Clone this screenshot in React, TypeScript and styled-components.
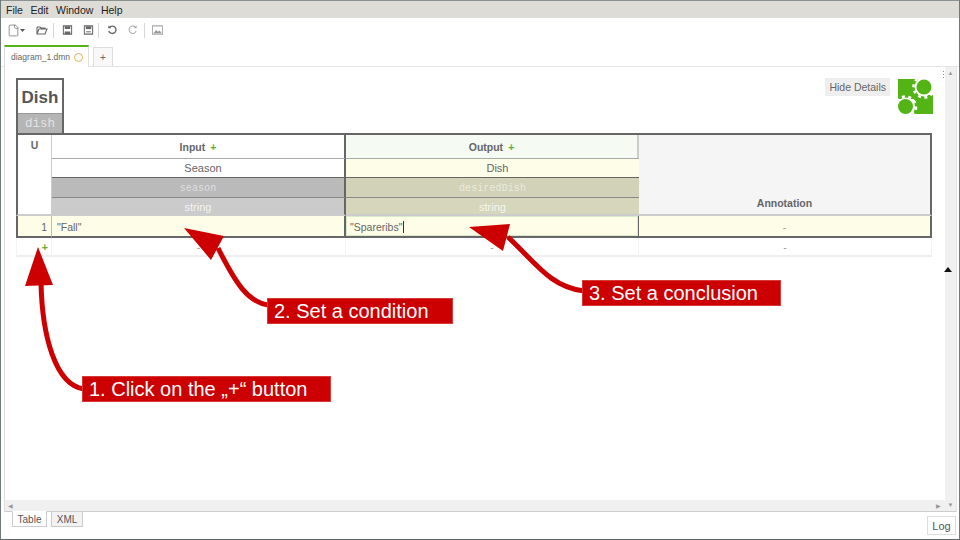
import React from "react";
import styled, {createGlobalStyle} from "styled-components";
import {LuFile} from "react-icons/lu";

const Global = createGlobalStyle`
    html, body { margin: 0; padding: 0; background: #fff; }
    body { font-family: "Liberation Sans", Arial, sans-serif; color: #444; }
`;

const Page = styled.div`
    position: relative;
    width: 960px;
    height: 540px;
    overflow: hidden;
    display: flex;
    flex-direction: column;
    box-sizing: border-box;
    border-left: 1px solid #6f7a7a;
    border-right: 1px solid #6f7a7a;
    border-bottom: 1px solid #5c6464;
    background: #fff;
`;

const MenuBar = styled.div`
    height: 18px;
    flex: none;
    display: flex;
    align-items: center;
    gap: 7.5px;
    padding: 1px 0 0 5px;
    box-sizing: border-box;
    background: #dedcd6;
    border-top: 1px solid #8d9292;
    font-size: 10.5px;
    color: #222;
`;

const Toolbar = styled.div`
    height: 26px;
    flex: none;
    display: flex;
    align-items: center;
    padding: 0 0 2px 6px;
    box-sizing: border-box;
    color: #555;
`;

const ToolIcon = styled.svg<{$width?: number; $faded?: boolean}>`
    width: ${(p) => p.$width ?? 11}px;
    height: 12px;
    flex: none;
    fill: none;
    stroke: ${(p) => (p.$faded ? "#aaa" : "#666")};
    stroke-width: 1.1;
`;

const ToolGap = styled.span<{$w: number}>`
    width: ${(p) => p.$w}px;
    flex: none;
`;

const ToolDivider = styled.span<{$l: number; $r: number}>`
    width: 1px;
    height: 15px;
    flex: none;
    margin: 0 ${(p) => p.$r}px 0 ${(p) => p.$l}px;
    background: #d6d6d6;
`;

const TabStrip = styled.div`
    height: 23px;
    flex: none;
    display: flex;
    align-items: flex-end;
    gap: 4px;
    padding-left: 3px;
    box-sizing: border-box;
    border-bottom: 1px solid #e4e4e4;
`;

const FileTab = styled.div`
    width: 85px;
    height: 22px;
    display: flex;
    align-items: center;
    gap: 4px;
    box-sizing: border-box;
    padding-left: 6px;
    margin-bottom: -1px;
    background: #fff;
    border: 1px solid #ddd;
    border-top: 2px solid #52b415;
    border-bottom: none;
    font-size: 8.5px;
    color: #666;
`;

const DirtyDot = styled.span`
    width: 9px;
    height: 9px;
    flex: none;
    box-sizing: border-box;
    border: 1px solid #d9b44a;
    border-radius: 50%;
`;

const AddTab = styled.div`
    width: 20px;
    height: 19px;
    display: flex;
    align-items: center;
    justify-content: center;
    box-sizing: border-box;
    background: #f8f8f8;
    border: 1px solid #ddd;
    border-bottom: none;
    font-size: 10px;
    color: #666;
`;

const Workspace = styled.div`
    flex: 1;
    display: flex;
    margin: 0 2px 0 3px;
    min-height: 0;
    border-left: 1px solid #ddd;
    border-right: 1px solid #e4e4e4;
    border-bottom: 1px solid #ccc;
`;

const ScrollColumn = styled.div`
    flex: 1;
    min-width: 0;
    display: flex;
    flex-direction: column;
`;

const Canvas = styled.div`
    flex: 1;
    min-height: 0;
    padding: 11px 12px 0 11px;
    display: flex;
    flex-direction: column;
`;

const TopRow = styled.div`
    display: flex;
    align-items: flex-start;
    justify-content: space-between;
    height: 55px;
    flex: none;
`;

const NameBox = styled.div`
    width: 48px;
    box-sizing: border-box;
    border: 2px solid #666;
    border-bottom: none;
`;

const NameTitle = styled.div`
    height: 33px;
    display: flex;
    align-items: center;
    justify-content: center;
    font-size: 17px;
    font-weight: bold;
    color: #555;
    padding-top: 3px;
    box-sizing: border-box;
`;

const NameId = styled.div`
    height: 20px;
    display: flex;
    align-items: center;
    justify-content: center;
    background: #b5b5b5;
    border-top: 1px solid #999;
    box-sizing: border-box;
    padding-top: 1px;
    font-family: "Liberation Mono", monospace;
    font-size: 12.5px;
    color: #e2e2e2;
`;

const DetailsArea = styled.div`
    display: flex;
    align-items: flex-start;
    gap: 8px;
`;

const HideDetails = styled.div`
    height: 18px;
    padding: 0 4px;
    display: flex;
    align-items: center;
    background: #eee;
    font-size: 10.5px;
    color: #666;
`;

const LogoMark = styled.svg`
    width: 35px;
    height: 35px;
    margin-top: 1px;
    flex: none;
`;

const Decision = styled.div`
    width: 916px;
    display: grid;
    grid-template-columns: 36px 294px 293px 293px;
    grid-template-rows: 23px 20px 20px 18px 22px 19px;
    font-size: 10.5px;
    color: #555;
    box-sizing: border-box;
    border-top: 2px solid #666;
`;

type CellProps = {
    $bg?: string;
    $color?: string;
    $left?: string;
    $right?: string;
    $top?: string;
    $bottom?: string;
    $align?: string;
    $valign?: string;
    $bold?: boolean;
    $mono?: boolean;
    $large?: boolean;
    $rows?: number;
    $pad?: string;
};

const Cell = styled.div<CellProps>`
    display: flex;
    box-sizing: border-box;
    min-width: 0;
    align-items: ${(p) => p.$valign ?? "center"};
    justify-content: ${(p) => p.$align ?? "center"};
    background: ${(p) => p.$bg ?? "#fff"};
    color: ${(p) => p.$color ?? "#666"};
    border-left: ${(p) => p.$left ?? "none"};
    border-right: ${(p) => p.$right ?? "none"};
    border-top: ${(p) => p.$top ?? "none"};
    border-bottom: ${(p) => p.$bottom ?? "none"};
    font-weight: ${(p) => (p.$bold ? "bold" : "normal")};
    font-family: ${(p) => (p.$mono ? '"Liberation Mono", monospace' : "inherit")};
    font-size: ${(p) => (p.$mono ? "10px" : p.$large ? "11px" : "inherit")};
    letter-spacing: ${(p) => (p.$mono ? "0.1px" : "0")};
    grid-row: span ${(p) => p.$rows ?? 1};
    padding: ${(p) => p.$pad ?? "0"};
`;

const Plus = styled.span`
    color: #5cad3c;
    font-weight: bold;
    margin-left: 5px;
`;

const Caret = styled.span`
    display: inline-block;
    width: 1px;
    height: 12px;
    margin-left: 1px;
    background: #333;
`;

const Dash = styled.span`
    color: #999;
`;

const ScrollbarV = styled.div`
    width: 11px;
    flex: none;
    display: flex;
    flex-direction: column;
    align-items: center;
    justify-content: space-between;
    background: #f0f0f0;
    padding: 3px 0;
    box-sizing: border-box;
    font-size: 6px;
    color: #999;
`;

const ScrollbarH = styled.div`
    height: 11px;
    flex: none;
    display: flex;
    align-items: center;
    justify-content: space-between;
    background: #f0f0f0;
    padding: 0 4px 0 3px;
    font-size: 6px;
    color: #999;
`;

const Footer = styled.div`
    height: 27px;
    flex: none;
    display: flex;
    justify-content: space-between;
    padding: 0 3px 0 11px;
    box-sizing: border-box;
`;

const FooterTabs = styled.div`
    display: flex;
    align-items: flex-start;
    gap: 4px;
`;

const SheetTab = styled.div<{$active?: boolean}>`
    width: ${(p) => (p.$active ? 35 : 32)}px;
    height: 16px;
    margin-top: -1px;
    display: flex;
    align-items: center;
    justify-content: center;
    box-sizing: border-box;
    background: ${(p) => (p.$active ? "#fff" : "#f2f2f2")};
    border: 1px solid #ccc;
    border-top-color: ${(p) => (p.$active ? "#fff" : "#ccc")};
    font-size: 10px;
    color: #555;
`;

const LogButton = styled.div`
    width: 29px;
    height: 19px;
    margin-top: 4px;
    display: flex;
    align-items: center;
    justify-content: center;
    box-sizing: border-box;
    border: 1px solid #ddd;
    font-size: 11px;
    color: #555;
`;

const Overlay = styled.svg`
    position: absolute;
    left: -1px;
    top: 0;
    width: 960px;
    height: 540px;
    pointer-events: none;
`;

const Callout = styled.div<{$x: number; $y: number; $w: number}>`
    position: absolute;
    left: ${(p) => p.$x - 1}px;
    top: ${(p) => p.$y}px;
    width: ${(p) => p.$w}px;
    height: 26px;
    box-sizing: border-box;
    display: flex;
    align-items: center;
    padding-left: 6px;
    background: #cc0000;
    border: 1px solid #d83a3a;
    color: #fff;
    font-size: 20px;
    white-space: nowrap;
`;

const ResizeMark = styled.svg`
    position: absolute;
    left: 943px;
    top: 267px;
    width: 8px;
    height: 5px;
    fill: #111;
`;

const ScrollDots = styled.svg`
    position: absolute;
    left: 942px;
    top: 71px;
    width: 2px;
    height: 7px;
    fill: #888;
`;

const line = "1px solid #aaa";
const dark = "2px solid #666";
const faint = "1px solid #f4f4f4";

const Logo = () => (
    <LogoMark viewBox="0 0 35 35">
        <rect fill="#52b415" x="0" y="0" width="20" height="20" />
        <rect fill="#52b415" x="16" y="16" width="19" height="19" />
        <g fill="#fff" stroke="#fff">
            <circle cx="26" cy="8" r="9" strokeWidth="1" />
            <circle cx="7.5" cy="28" r="9" strokeWidth="1" />
        </g>
        <g fill="none" stroke="#fff" strokeWidth="2.5" strokeDasharray="3 3.5">
            <circle cx="26" cy="8" r="10.5" />
            <circle cx="7.5" cy="28" r="10.5" />
        </g>
        <circle fill="#52b415" cx="26" cy="8" r="7.5" />
        <circle fill="#52b415" cx="7.5" cy="27.5" r="7.5" />
    </LogoMark>
);

export default function App() {
    return (
        <Page>
            <Global />
            <MenuBar>
                <span>File</span>
                <span>Edit</span>
                <span>Window</span>
                <span>Help</span>
            </MenuBar>
            <Toolbar>
                <LuFile size={13} strokeWidth={1.3} color="#666" />
                <ToolIcon $width={5} viewBox="0 0 5 12">
                    <path d="M0 5h5L2.5 8z" fill="#555" stroke="none" />
                </ToolIcon>
                <ToolGap $w={11} />
                <ToolIcon $width={12} viewBox="0 0 12 12">
                    <path d="M1 3h3l1 1h4v1M1 3v7h8l2-5H3l-2 5" />
                </ToolIcon>
                <ToolDivider $l={5} $r={8} />
                <ToolIcon viewBox="0 0 12 12">
                    <path d="M1.5 1.5h9v9h-9z" />
                    <path d="M3 2h6v3H3zM3 7.5h6v3H3z" fill="#666" stroke="none" />
                </ToolIcon>
                <ToolGap $w={10} />
                <ToolIcon viewBox="0 0 12 12">
                    <path d="M1.5 1.5h9v9h-9z" />
                    <path d="M3 2h6v3H3z" fill="#666" stroke="none" />
                    <path d="M3.5 8h5" />
                </ToolIcon>
                <ToolDivider $l={4} $r={8} />
                <ToolIcon viewBox="0 0 12 12" style={{strokeWidth: 1.5}}>
                    <path d="M2.5 3.5A4 4 0 1 1 2 7" />
                    <path d="M1.5 1v3.2h3.2" fill="#555" stroke="none" />
                </ToolIcon>
                <ToolGap $w={9} />
                <ToolIcon $faded viewBox="0 0 12 12">
                    <path d="M9.5 3.5A4 4 0 1 0 10 7" />
                    <path d="M10.5 1v3.2H7.3" fill="#aaa" stroke="none" />
                </ToolIcon>
                <ToolDivider $l={6} $r={7} />
                <ToolIcon $faded viewBox="0 0 12 12">
                    <path d="M.5 1.5h11v9H.5z" />
                    <path d="M1.5 9.5 4.5 6l2 2 2-1.5 2 3z" fill="#999" stroke="none" />
                </ToolIcon>
            </Toolbar>
            <TabStrip>
                <FileTab>
                    diagram_1.dmn
                    <DirtyDot />
                </FileTab>
                <AddTab>+</AddTab>
            </TabStrip>
            <Workspace>
                <ScrollColumn>
                    <Canvas>
                        <TopRow>
                            <NameBox>
                                <NameTitle>Dish</NameTitle>
                                <NameId>dish</NameId>
                            </NameBox>
                            <DetailsArea>
                                <HideDetails>Hide Details</HideDetails>
                                <Logo />
                            </DetailsArea>
                        </TopRow>
                        <Decision>
                            <Cell $rows={4} $valign="flex-start" $bold $pad="4px 0 0" $left={dark} $right="1px solid #ccc" $bottom="2px solid #ccc">U</Cell>
                            <Cell $bold $right={dark}>Input<Plus>+</Plus></Cell>
                            <Cell $bold $bg="#f5faf3" $right="2px solid #ccc">Output<Plus>+</Plus></Cell>
                            <Cell $rows={4} $bold $bg="#f5f5f5" $valign="flex-end" $pad="0 0 5px" $right={dark} $bottom="2px solid #ccc">Annotation</Cell>

                            <Cell $large $pad="0 0 0 10px" $top={line} $bottom="1px solid #666" $right={dark}>Season</Cell>
                            <Cell $large $pad="0 0 0 10px" $bg="#fdfde8" $top={line} $bottom="1px solid #666">Dish</Cell>

                            <Cell $pad="1px 0 0" $bg="#bababa" $color="#dedede" $mono $bottom="1px solid #888" $right={dark}>season</Cell>
                            <Cell $pad="1px 0 0" $bg="#d2d2b8" $color="#eaeada" $mono $bottom="1px solid #888">desiredDish</Cell>

                            <Cell $pad="1px 0 0" $large $bg="#cbcbcb" $color="#f2f2f2" $bottom="2px solid #ccc" $right={dark}>string</Cell>
                            <Cell $pad="1px 0 0" $large $bg="#d6d6bd" $color="#f5f5ea" $bottom="2px solid #ccc">string</Cell>

                            <Cell $bg="#fdfde8" $align="flex-end" $pad="1px 4px 0 0" $left={dark} $right="1px solid #bbb" $bottom={dark}>1</Cell>
                            <Cell $bg="#fdfde8" $align="flex-start" $pad="1px 0 0 5px" $right={dark} $bottom={dark}>"Fall"</Cell>
                            <Cell $bg="#fdfde8" $align="flex-start" $pad="1px 0 0 4px" $right="1px solid #666" $bottom={dark} style={{boxShadow: "inset 0 0 0 1px #d6ecc8"}}>
                                "Spareribs"<Caret />
                            </Cell>
                            <Cell $pad="1px 0 0" $bg="#fdfde8" $right={dark} $bottom={dark}><Dash>-</Dash></Cell>

                            <Cell $align="flex-end" $pad="0 3px 0 0" $left={faint} $right={faint} $bottom="2px solid #eee"><Plus>+</Plus></Cell>
                            <Cell $right={faint} $bottom="2px solid #eee"><Dash>-</Dash></Cell>
                            <Cell $right={faint} $bottom="2px solid #eee"><Dash>-</Dash></Cell>
                            <Cell $right={faint} $bottom="2px solid #eee"><Dash>-</Dash></Cell>
                        </Decision>
                    </Canvas>
                    <ScrollbarH>
                        <span>◀</span>
                        <span>▶</span>
                    </ScrollbarH>
                </ScrollColumn>
                <ScrollbarV>
                    <span>▲</span>
                    <span>▼</span>
                </ScrollbarV>
            </Workspace>
            <Footer>
                <FooterTabs>
                    <SheetTab $active>Table</SheetTab>
                    <SheetTab>XML</SheetTab>
                </FooterTabs>
                <LogButton>Log</LogButton>
            </Footer>

            <ResizeMark viewBox="0 0 8 5">
                <path d="M0 5 4 0l4 5z" />
            </ResizeMark>
            <ScrollDots viewBox="0 0 2 7">
                <rect x="0" y="0" width="1" height="1" />
                <rect x="0" y="3" width="1" height="1" />
                <rect x="0" y="6" width="1" height="1" />
            </ScrollDots>

            <Overlay viewBox="0 0 960 540">
                <g fill="none" stroke="#cc0000" strokeWidth="5">
                    <path d="M41 282C42 335 55 385 84 389" />
                    <path d="M218 248C236 284 248 302 268 305" />
                    <path d="M508 237C535 262 550 287 584 291" />
                </g>
                <g fill="#cc0000">
                    <path d="M38 247 25 286l28-1z" />
                    <path d="M184 228 224 236 211 260z" />
                    <path d="M469 227 510 224 503 251z" />
                </g>
            </Overlay>
            <Callout $x={82} $y={376} $w={249}>1. Click on the „+“ button</Callout>
            <Callout $x={267} $y={298} $w={186}>2. Set a condition</Callout>
            <Callout $x={582} $y={280} $w={199}>3. Set a conclusion</Callout>
        </Page>
    );
}
